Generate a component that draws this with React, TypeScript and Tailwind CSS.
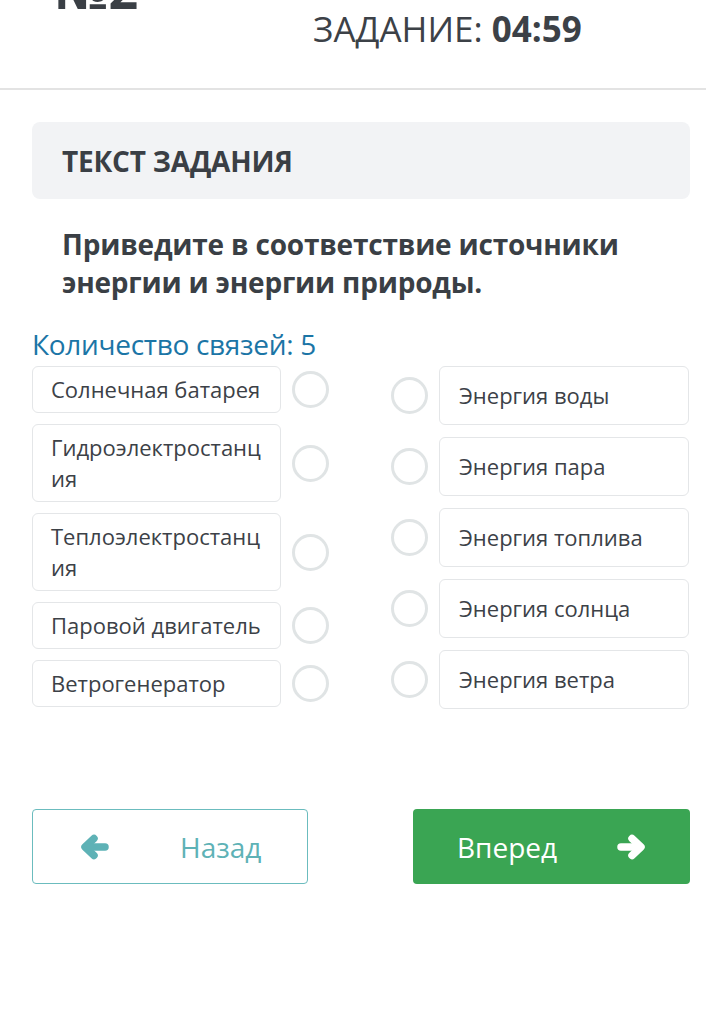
import React from "react";

const left = [
  "Солнечная батарея",
  "Гидроэлектростанция",
  "Теплоэлектростанция",
  "Паровой двигатель",
  "Ветрогенератор",
];
const right = [
  "Энергия воды",
  "Энергия пара",
  "Энергия топлива",
  "Энергия солнца",
  "Энергия ветра",
];

function Circle() {
  return <div className="w-[37px] h-[37px] shrink-0 rounded-full border-[3px] border-[#e0e4e5] bg-white" />;
}

function Arrow({ dir, className }: { dir: "left" | "right"; className?: string }) {
  return (
    <svg viewBox="0 0 30 26" className={className} style={{ transform: dir === "right" ? "scaleX(-1)" : undefined }}>
      <g fill="none" stroke="currentColor" strokeWidth="7.5" strokeLinecap="round" strokeLinejoin="round">
        <polyline points="14,4.5 5,13 14,21.5" />
        <line x1="6" y1="13" x2="25" y2="13" />
      </g>
    </svg>
  );
}

export default function App() {
  return (
    <div className="w-[706px] h-[1026px] bg-white overflow-hidden text-[#3c4147]" style={{ fontFamily: '"Open Sans", "Liberation Sans", sans-serif' }}>
      <header className="h-[90px] border-b-2 border-[#e3e3e3] relative flex">
        <div className="w-[313px] pl-[55px] -mt-[34px] text-[52px] font-bold leading-[46px] text-[#3a3f45]">№2</div>
        <div className="pt-[6px] text-[35px] leading-[46px] text-[#3c4147]">
          ЗАДАНИЕ: <span className="font-bold">04:59</span>
        </div>
      </header>
      <main className="pl-[32px] pr-[16px] pt-[32px]">
        <div className="h-[77px] rounded-[8px] bg-[#f2f3f5] flex items-center pl-[30px]">
          <span className="text-[28px] font-bold tracking-[-0.2px] text-[#3a3f45]">ТЕКСТ ЗАДАНИЯ</span>
        </div>
        <p className="pl-[30px] pt-[26px] text-[28px] leading-[38px] font-bold text-[#3a3f45] tracking-[-0.2px]">
          Приведите в соответствие источники<br />энергии и энергии природы.
        </p>
        <div className="pt-[25px] text-[28px] leading-[36px] text-[#1b75a6] tracking-[-0.3px]">Количество связей: 5</div>
        <div className="flex mt-[4px]">
          <div className="flex flex-col gap-[11px] w-[298px]">
            {left.map((t) => (
              <div key={t} className="flex items-center">
                <div className="w-[249px] border border-[#e4e6e8] rounded-[6px] px-[18px] py-[7px] text-[22px] leading-[31px] break-all text-[#3c4147]">
                  {t}
                </div>
                <div className="ml-[11px]"><Circle /></div>
              </div>
            ))}
          </div>
          <div className="flex flex-col gap-[12px] ml-[61px]">
            {right.map((t) => (
              <div key={t} className="flex items-center">
                <Circle />
                <div className="ml-[11px] w-[250px] h-[59px] border border-[#e4e6e8] rounded-[6px] px-[19px] flex items-center text-[22px] text-[#3c4147]">
                  {t}
                </div>
              </div>
            ))}
          </div>
        </div>
        <div className="flex justify-between mt-[100px]">
          <button className="w-[276px] h-[75px] border border-[#6bbcbe] rounded-[4px] flex items-center text-[#5eb2b6] text-[28px]">
            <Arrow dir="left" className="ml-[47px] w-[30px] h-[26px]" />
            <span className="ml-[70px]">Назад</span>
          </button>
          <button className="w-[277px] h-[75px] bg-[#3aa553] rounded-[4px] flex items-center text-white text-[28px]">
            <span className="ml-[44px]">Вперед</span>
            <Arrow dir="right" className="ml-auto mr-[44px] w-[30px] h-[26px]" />
          </button>
        </div>
      </main>
    </div>
  );
}
